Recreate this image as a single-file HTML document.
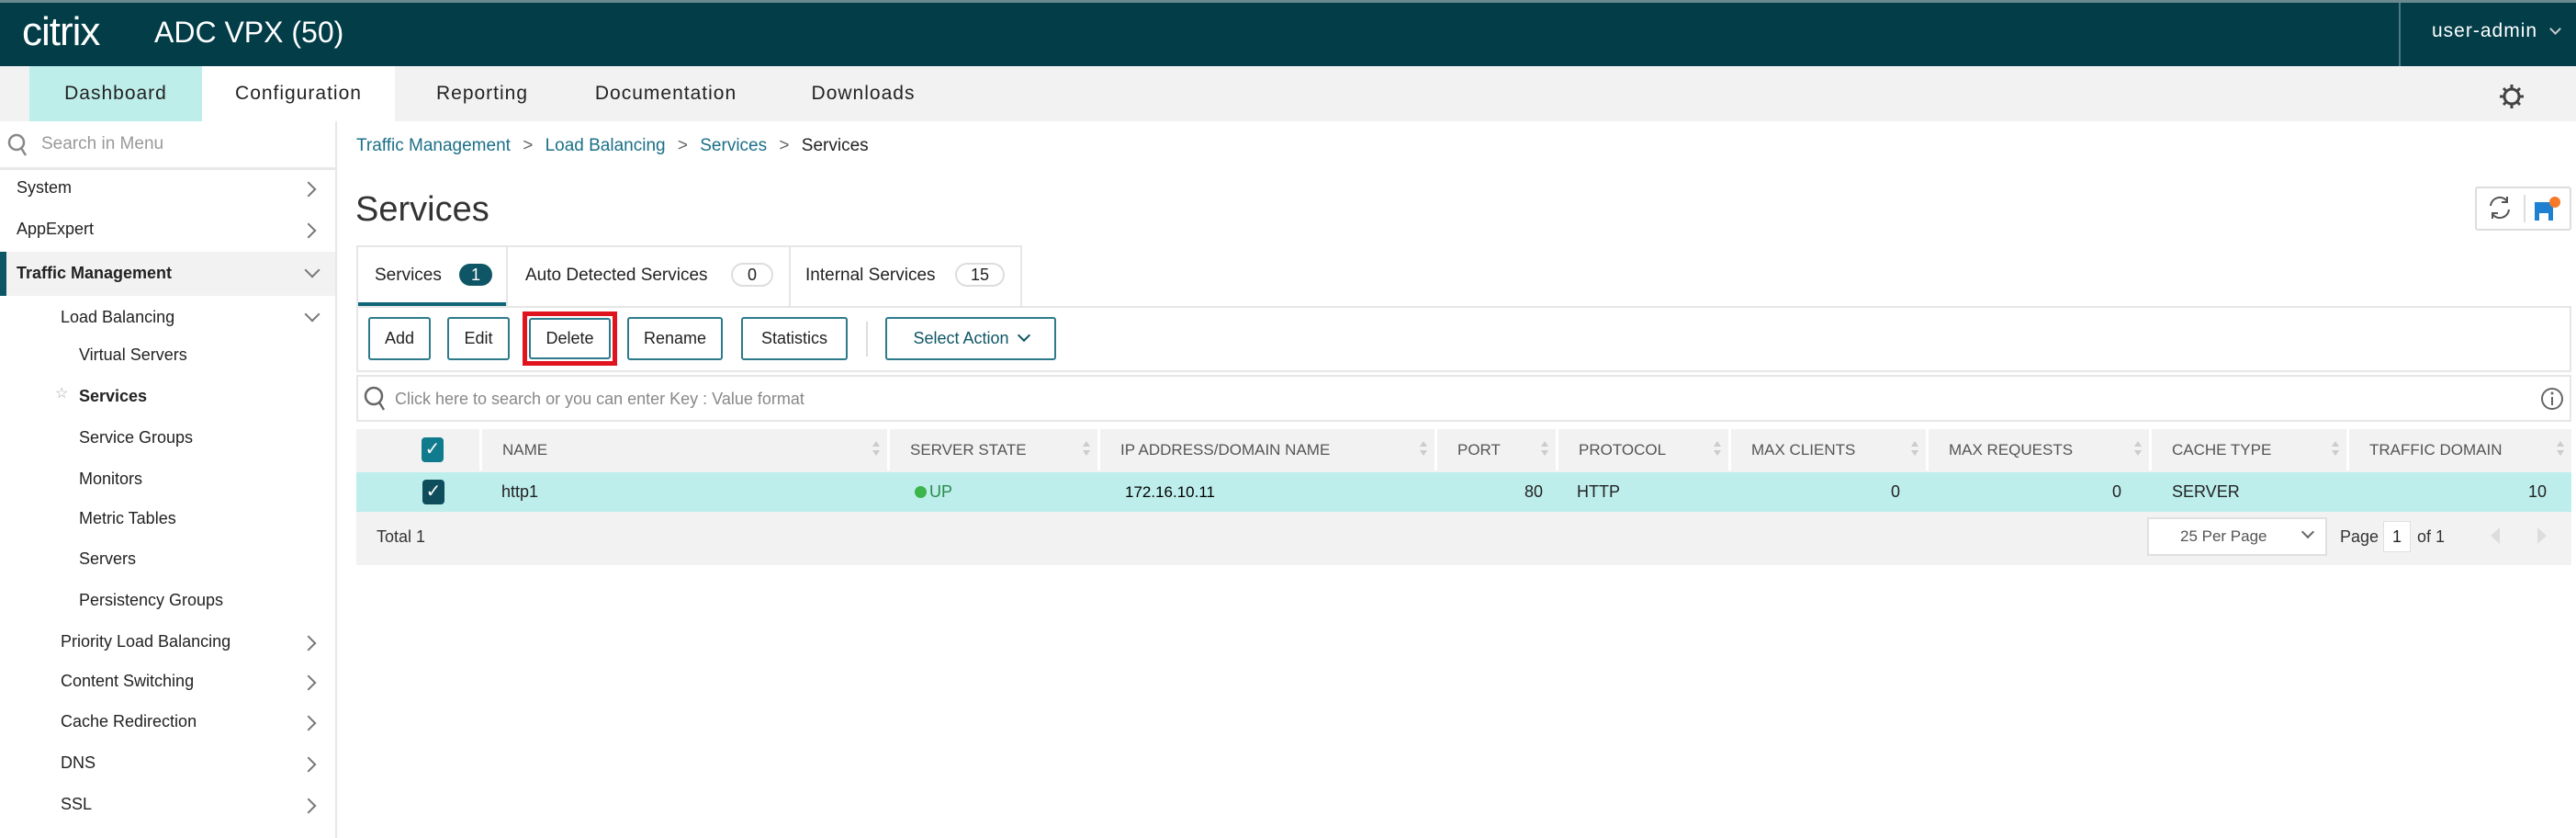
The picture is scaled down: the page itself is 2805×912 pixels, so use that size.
<!DOCTYPE html>
<html><head><meta charset="utf-8"><style>
*{box-sizing:border-box;margin:0;padding:0}
body{width:2805px;height:912px;position:relative;background:#fff;font-family:"Liberation Sans",sans-serif;overflow:hidden;color:#222}
.a{position:absolute;white-space:nowrap}
.hdr{left:0;top:0;width:2805px;height:72px;background:#023d48;border-top:3px solid #6a8a90}
.nav{left:0;top:72px;width:2805px;height:60px;background:#f2f2f2}
.nt{top:72px;height:60px;line-height:60px;font-size:21px;color:#222;letter-spacing:1px;text-align:center}
.side{font-size:18px;color:#222}
.chev{position:absolute;width:12px;height:12px;border-right:2px solid #777;border-bottom:2px solid #777}
.btn{top:345px;height:47px;border:2px solid #2d7a8a;border-radius:3px;font-size:18px;line-height:43px;text-align:center;color:#222;background:#fff}
.th{top:467px;height:45px;line-height:45px;font-size:17px;color:#555;background:#f2f2f2;padding-left:22px;border-left:3px solid #fff}
.td{top:514px;height:43px;line-height:43px;font-size:18px;color:#222}
.sort{position:absolute;right:8px;top:13px;width:8px;height:18px}
.sort:before{content:"";position:absolute;left:0;top:0;border:4px solid transparent;border-bottom:6px solid #ccc;border-top:0}
.sort:after{content:"";position:absolute;left:0;top:10px;border:4px solid transparent;border-top:6px solid #ccc;border-bottom:0}
.cb{width:24px;height:27px;border-radius:4px;background:#0e6577;color:#fff;font-size:20px;line-height:27px;text-align:center}
</style></head><body>
<div class="a hdr"></div>
<div class="a" style="left:24px;top:10px;font-size:44px;color:#fff;letter-spacing:-1px;font-weight:300">citrix</div>
<div class="a" style="left:168px;top:17px;font-size:32px;color:#fff">ADC VPX (50)</div>
<div class="a" style="left:2612px;top:3px;width:2px;height:69px;background:#4d7a82"></div>
<div class="a" style="left:2648px;top:22px;font-size:21px;color:#fff;letter-spacing:1px">user-admin</div>
<div class="a chev" style="left:2778px;top:27px;width:9px;height:9px;border-color:#ccc;transform:rotate(45deg)"></div>
<div class="a nav"></div>
<div class="a nt" style="left:32px;width:188px;background:#bdeeea">Dashboard</div>
<div class="a nt" style="left:220px;width:210px;background:#fff">Configuration</div>
<div class="a nt" style="left:440px;width:170px">Reporting</div>
<div class="a nt" style="left:630px;width:190px">Documentation</div>
<div class="a nt" style="left:860px;width:160px">Downloads</div>
<svg class="a" style="left:2720px;top:90px" width="30" height="30" viewBox="0 0 30 30"><g stroke="#444" stroke-width="3"><line x1="15" y1="2" x2="15" y2="28"/><line x1="2" y1="15" x2="28" y2="15"/><line x1="6" y1="6" x2="24" y2="24"/><line x1="24" y1="6" x2="6" y2="24"/></g><circle cx="15" cy="15" r="8" fill="#f2f2f2" stroke="#444" stroke-width="3"/></svg>

<div class="a" style="left:365px;top:132px;width:2px;height:780px;background:#e8e8e8"></div>
<div class="a" style="left:0;top:182px;width:365px;height:3px;background:#e8e8e8"></div>
<svg class="a" style="left:8px;top:145px" width="22" height="26" viewBox="0 0 22 26"><circle cx="10" cy="10" r="8" fill="none" stroke="#888" stroke-width="2.5"/><line x1="15" y1="16" x2="20" y2="24" stroke="#888" stroke-width="2.5"/></svg>
<div class="a" style="left:45px;top:146px;font-size:19px;color:#999">Search in Menu</div>
<div class="a" style="left:0;top:274px;width:365px;height:48px;background:#f2f2f2"></div>
<div class="a" style="left:0;top:274px;width:7px;height:48px;background:#0e5666"></div>
<div class="a side" style="left:18px;top:194px">System</div>
<div class="a side" style="left:18px;top:239px">AppExpert</div>
<div class="a side" style="left:18px;top:287px;font-weight:bold">Traffic Management</div>
<div class="a side" style="left:66px;top:335px">Load Balancing</div>
<div class="a side" style="left:86px;top:376px">Virtual Servers</div>
<div class="a" style="left:60px;top:418px;font-size:16px;color:#aaa">☆</div>
<div class="a side" style="left:86px;top:421px;font-weight:bold">Services</div>
<div class="a side" style="left:86px;top:466px">Service Groups</div>
<div class="a side" style="left:86px;top:511px">Monitors</div>
<div class="a side" style="left:86px;top:554px">Metric Tables</div>
<div class="a side" style="left:86px;top:598px">Servers</div>
<div class="a side" style="left:86px;top:643px">Persistency Groups</div>
<div class="a side" style="left:66px;top:688px">Priority Load Balancing</div>
<div class="a side" style="left:66px;top:731px">Content Switching</div>
<div class="a side" style="left:66px;top:775px">Cache Redirection</div>
<div class="a side" style="left:66px;top:820px">DNS</div>
<div class="a side" style="left:66px;top:865px">SSL</div>
<div class="chev" style="left:330px;top:200px;transform:rotate(-45deg)"></div>
<div class="chev" style="left:330px;top:245px;transform:rotate(-45deg)"></div>
<div class="chev" style="left:334px;top:288px;transform:rotate(45deg)"></div>
<div class="chev" style="left:334px;top:336px;transform:rotate(45deg)"></div>
<div class="chev" style="left:330px;top:694px;transform:rotate(-45deg)"></div>
<div class="chev" style="left:330px;top:737px;transform:rotate(-45deg)"></div>
<div class="chev" style="left:330px;top:781px;transform:rotate(-45deg)"></div>
<div class="chev" style="left:330px;top:826px;transform:rotate(-45deg)"></div>
<div class="chev" style="left:330px;top:871px;transform:rotate(-45deg)"></div>

<div class="a" style="left:388px;top:148px;font-size:19px;color:#1b6f87">Traffic Management <span style="color:#666;margin:0 8px">&gt;</span> Load Balancing <span style="color:#666;margin:0 8px">&gt;</span> Services <span style="color:#666;margin:0 8px">&gt;</span> <span style="color:#222">Services</span></div>
<div class="a" style="left:387px;top:207px;font-size:38px;color:#333">Services</div>
<div class="a" style="left:2695px;top:203px;width:105px;height:48px;border:2px solid #ddd;border-radius:3px;background:#fff"></div>
<div class="a" style="left:2748px;top:212px;width:2px;height:30px;background:#ddd"></div>
<svg class="a" style="left:2706px;top:210px" width="32" height="32" viewBox="0 0 32 32"><path d="M6 14a10 10 0 0 1 18-5M26 18a10 10 0 0 1-18 5" fill="none" stroke="#555" stroke-width="2"/><path d="M24 4v6h-6M8 28v-6h6" fill="none" stroke="#555" stroke-width="2"/></svg>
<svg class="a" style="left:2758px;top:212px" width="34" height="32" viewBox="0 0 34 32"><rect x="2" y="8" width="20" height="20" fill="#1f7fd0"/><rect x="7" y="20" width="10" height="8" fill="#fff"/><circle cx="24" cy="8" r="6" fill="#f57a2a"/></svg>

<div class="a" style="left:388px;top:267px;width:725px;height:67px;border:2px solid #e6e6e6;border-bottom:none"></div>
<div class="a" style="left:551px;top:267px;width:2px;height:66px;background:#e6e6e6"></div>
<div class="a" style="left:859px;top:267px;width:2px;height:66px;background:#e6e6e6"></div>
<div class="a" style="left:390px;top:329px;width:161px;height:5px;background:#0e6577"></div>
<div class="a" style="left:408px;top:289px;font-size:19px">Services</div>
<div class="a" style="left:500px;top:287px;width:36px;height:24px;border-radius:12px;background:#0e5666;color:#fff;font-size:18px;text-align:center;line-height:24px">1</div>
<div class="a" style="left:572px;top:289px;font-size:19px">Auto Detected Services</div>
<div class="a" style="left:796px;top:286px;width:46px;height:26px;border-radius:13px;border:2px solid #ddd;font-size:18px;text-align:center;line-height:22px">0</div>
<div class="a" style="left:877px;top:289px;font-size:19px">Internal Services</div>
<div class="a" style="left:1040px;top:286px;width:54px;height:26px;border-radius:13px;border:2px solid #ddd;font-size:18px;text-align:center;line-height:22px">15</div>

<div class="a" style="left:388px;top:333px;width:2412px;height:72px;border:2px solid #e6e6e6"></div>
<div class="a btn" style="left:401px;width:68px">Add</div>
<div class="a btn" style="left:487px;width:68px">Edit</div>
<div class="a" style="left:569px;top:339px;width:103px;height:59px;border:5px solid #e0141e"></div>
<div class="a btn" style="left:576px;top:346px;width:89px;height:45px;line-height:41px">Delete</div>
<div class="a btn" style="left:683px;width:104px">Rename</div>
<div class="a btn" style="left:807px;width:116px">Statistics</div>
<div class="a" style="left:943px;top:350px;width:2px;height:38px;background:#ddd"></div>
<div class="a btn" style="left:964px;width:186px;color:#0e5666">Select Action <span style="display:inline-block;width:10px;height:10px;border-right:2px solid #0e5666;border-bottom:2px solid #0e5666;transform:rotate(45deg);margin:0 0 4px 6px"></span></div>

<div class="a" style="left:388px;top:408px;width:2412px;height:51px;border:2px solid #e6e6e6"></div>
<svg class="a" style="left:396px;top:420px" width="24" height="30" viewBox="0 0 24 30"><circle cx="11" cy="11" r="9" fill="none" stroke="#666" stroke-width="2.5"/><line x1="17" y1="18" x2="22" y2="26" stroke="#666" stroke-width="2.5"/></svg>
<div class="a" style="left:430px;top:424px;font-size:18px;color:#888">Click here to search or you can enter Key : Value format</div>
<svg class="a" style="left:2766px;top:420px" width="26" height="28" viewBox="0 0 26 28"><circle cx="13" cy="14" r="11" fill="none" stroke="#666" stroke-width="2"/><line x1="13" y1="12" x2="13" y2="21" stroke="#666" stroke-width="2"/><circle cx="13" cy="8" r="1.5" fill="#666"/></svg>

<div class="a" style="left:388px;top:467px;width:2412px;height:148px;background:#f2f2f2"></div>
<div class="a th" style="left:388px;width:134px;border-left:none"></div>
<div class="a cb" style="left:459px;top:476px;background:#107b8c">✓</div>
<div class="a th" style="left:522px;width:444px">NAME<i class="sort"></i></div>
<div class="a th" style="left:966px;width:229px">SERVER STATE<i class="sort"></i></div>
<div class="a th" style="left:1195px;width:367px">IP ADDRESS/DOMAIN NAME<i class="sort"></i></div>
<div class="a th" style="left:1562px;width:132px">PORT<i class="sort"></i></div>
<div class="a th" style="left:1694px;width:188px">PROTOCOL<i class="sort"></i></div>
<div class="a th" style="left:1882px;width:215px">MAX CLIENTS<i class="sort"></i></div>
<div class="a th" style="left:2097px;width:243px">MAX REQUESTS<i class="sort"></i></div>
<div class="a th" style="left:2340px;width:215px">CACHE TYPE<i class="sort"></i></div>
<div class="a th" style="left:2555px;width:245px">TRAFFIC DOMAIN<i class="sort"></i></div>

<div class="a" style="left:388px;top:514px;width:2412px;height:43px;background:#bdeeec"></div>
<div class="a cb" style="left:460px;top:522px;background:#0e4d5c">✓</div>
<div class="a td" style="left:546px">http1</div>
<div class="a" style="left:996px;top:529px;width:13px;height:13px;border-radius:50%;background:#3cb64a"></div>
<div class="a td" style="left:1012px;color:#2a8a4a">UP</div>
<div class="a td" style="left:1225px;font-size:17px;color:#000">172.16.10.11</div>
<div class="a td" style="left:1562px;width:118px;text-align:right">80</div>
<div class="a td" style="left:1717px">HTTP</div>
<div class="a td" style="left:1882px;width:187px;text-align:right">0</div>
<div class="a td" style="left:2097px;width:213px;text-align:right">0</div>
<div class="a td" style="left:2365px">SERVER</div>
<div class="a td" style="left:2555px;width:218px;text-align:right">10</div>

<div class="a" style="left:410px;top:574px;font-size:18px;color:#333">Total 1</div>
<div class="a" style="left:2338px;top:563px;width:196px;height:42px;background:#fff;border:2px solid #e0e0e0;font-size:17px;line-height:38px;color:#555;padding-left:34px">25 Per Page</div>
<div class="a chev" style="left:2508px;top:574px;width:10px;height:10px;border-color:#666;transform:rotate(45deg)"></div>
<div class="a" style="left:2548px;top:574px;font-size:18px;color:#333">Page</div>
<div class="a" style="left:2595px;top:567px;width:30px;height:34px;background:#fff;border:1px solid #e0e0e0;font-size:18px;text-align:center;line-height:32px">1</div>
<div class="a" style="left:2632px;top:574px;font-size:18px;color:#333">of 1</div>
<div class="a" style="left:2712px;top:574px;border:9px solid transparent;border-right:10px solid #ddd;border-left:0"></div>
<div class="a" style="left:2763px;top:574px;border:9px solid transparent;border-left:10px solid #ddd;border-right:0"></div>
</body></html>
